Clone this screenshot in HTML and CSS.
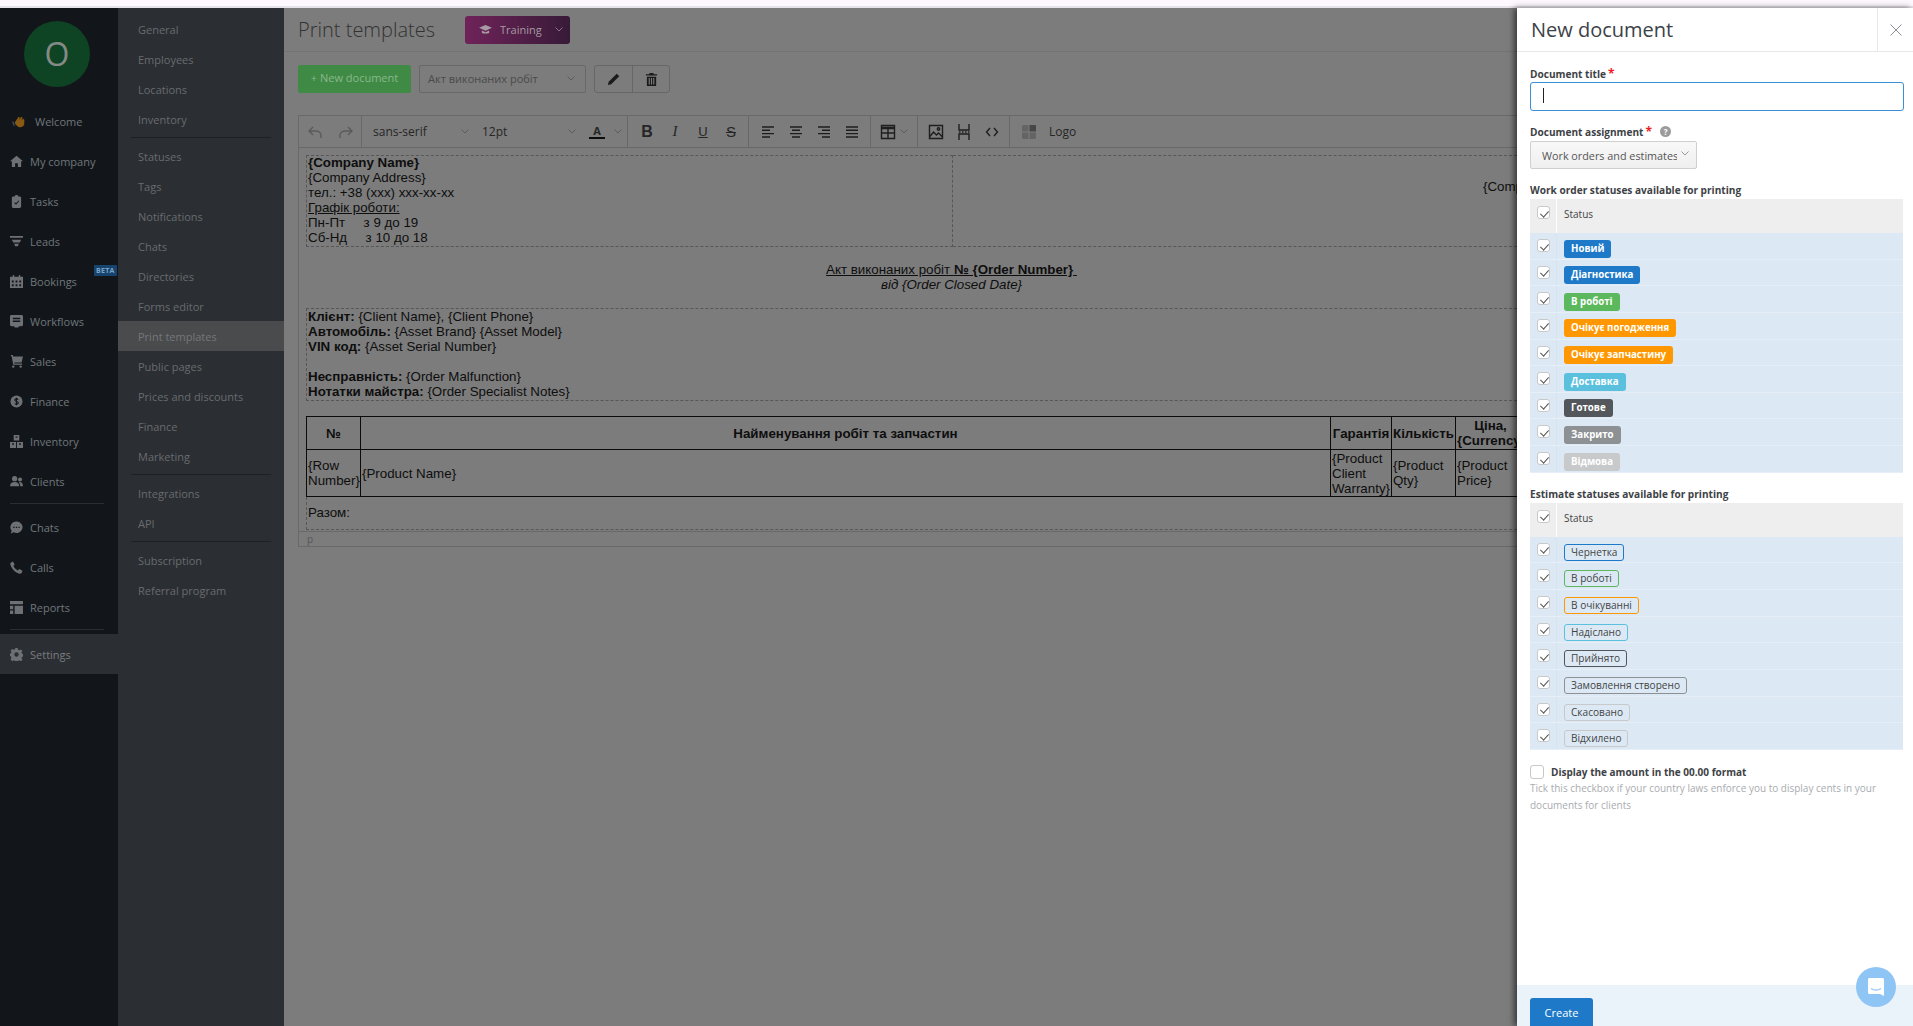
FILE: index.html
```html
<!DOCTYPE html>
<html lang="en">
<head>
<meta charset="utf-8">
<title>Print templates</title>
<link rel="stylesheet" href="styles.css">
</head>
<body>
<div class="strip"></div>
<div class="app">
  <nav class="sidebar">
    <div class="avatar">O</div>
    <a class="nav-item welcome"><svg class="hand" viewBox="0 0 16 16"><path fill="#8a5a12" d="M3 9 7 3l1.5 1L7 7l3-4 1.4 1L10 7l2-2 1.2 1L13 11c-.6 3-4.4 4-6.4 2.6L3.6 11z"/><path fill="#3b4f63" d="M0 8l2 5 1-1-1.500-4z"/></svg>Welcome</a>
    <a class="nav-item"><svg class="ico" viewBox="0 0 14 14"><path d="M7 .8 0 6.800h2V13h3.500V9h3v4H12V6.800h2z"/></svg>My company</a>
    <a class="nav-item"><svg class="ico" viewBox="0 0 14 14"><path fill-rule="evenodd" d="M5 1.500a2 1.500 0 0 1 4 0h1.500c.8 0 1.500.7 1.500 1.500v9.500c0 .8-.7 1.500-1.500 1.500h-7C2.700 14 2 13.300 2 12.500V3c0-.8.7-1.500 1.500-1.500zM4.500 8.500l2 2 3.500-4-.8-.7-2.700 3.100-1.300-1.200z"/></svg>Tasks</a>
    <a class="nav-item"><svg class="ico" viewBox="0 0 14 14"><path d="M0 1h14v2H0zM2 5h10l-1.500 3h-7zM4.500 9.500h5L8.500 12h-3z"/></svg>Leads</a>
    <a class="nav-item"><svg class="ico" viewBox="0 0 14 14"><path fill-rule="evenodd" d="M3 0h1.500v2h5V0H11v2h3v12H0V2h3zM2 6v2h2V6zm4 0v2h2V6zm4 0v2h2V6zM2 10v2h2v-2zm4 0v2h2v-2zm4 0v2h2v-2z"/></svg>Bookings<span class="beta">BETA</span></a>
    <a class="nav-item"><svg class="ico" viewBox="0 0 14 14"><path fill-rule="evenodd" d="M1.500 0h11c.8 0 1.500.7 1.500 1.500v9c0 .8-.7 1.500-1.500 1.500H9.500L9 13.500H5L4.500 12h-3C.7 12 0 11.300 0 10.500v-9C0 .7.7 0 1.500 0zM3 3v1.500h8V3zm0 3v1.500h8V6z"/></svg>Workflows</a>
    <a class="nav-item"><svg class="ico" viewBox="0 0 14 14"><path d="M1 0h2l.4 1.500H14L12.500 8H4.500l.3 1.200H13v1.300H3.500L1.800 1.300H1z"/><circle cx="3.500" cy="12.500" r="1.300"/><circle cx="11.500" cy="12.500" r="1.300"/></svg>Sales</a>
    <a class="nav-item"><svg class="ico" viewBox="0 0 14 14"><circle cx="7" cy="7" r="6.500"/><path fill="none" stroke="#12161a" stroke-width="1.200" d="M9 4.800C8 3.900 5.200 3.900 5.200 5.600 5.200 7.400 9 6.600 9 8.400 9 10.100 6 10.100 5 9.200M7 3v8"/></svg>Finance</a>
    <a class="nav-item"><svg class="ico" viewBox="0 0 14 14"><path fill-rule="evenodd" d="M4 0h6v6H4zM6 1.500V3h2V1.500zM0 7.500h6.500V14H0zM2.300 9v1.500h2V9zM7.500 7.500H14V14H7.500zM9.700 9v1.500h2V9z"/></svg>Inventory</a>
    <a class="nav-item"><svg class="ico" viewBox="0 0 14 14"><circle cx="5" cy="4" r="2.800"/><circle cx="10.800" cy="4.800" r="2.200"/><path d="M0 12c0-3 2-4.500 5-4.500S10 9 10 12zM11 12c0-1.800-.4-3.200-1.500-4.300 2.500-.5 4.500 1 4.500 4.300z"/></svg>Clients</a>
    <div class="nav-sep"></div>
    <a class="nav-item"><svg class="ico" viewBox="0 0 14 14"><path fill-rule="evenodd" d="M7 .5a6.500 6.200 0 1 1-3 11.700L.8 13.500l1-3A6.500 6.200 0 0 1 7 .5zM3.500 6.300v1.200h1.400V6.300zm2.800 0v1.200h1.400V6.300zm2.800 0v1.200h1.400V6.300z"/></svg>Chats</a>
    <a class="nav-item"><svg class="ico" viewBox="0 0 14 14"><path d="M3.200.5 5 3.800 3.700 5.300c.8 2 2.500 3.700 4.700 4.800l1.500-1.400L13.500 10.600 12.500 13c-.4.700-1.300 1-2 .8C5.500 12.300 1.700 8.500.3 3.500c-.2-.8.100-1.500.8-2z"/></svg>Calls</a>
    <a class="nav-item"><svg class="ico" viewBox="0 0 14 14"><path d="M0 0h14v3.500H0zM0 5h3.500v3.800H0zM0 10.300h3.500V14H0zM5 5h9v9H5z"/></svg>Reports</a>
    <div class="nav-sep nav-sep-last"></div>
    <a class="nav-item active"><svg class="ico" viewBox="0 0 14 14"><path fill-rule="evenodd" d="M5.800 0h2.400l.4 1.900 1.400.6 1.700-1 1.700 1.700-1 1.700.6 1.400 2 .4v2.400l-2 .4-.6 1.400 1 1.700-1.700 1.700-1.700-1-1.400.6-.4 2H5.800l-.4-2-1.400-.6-1.700 1L.6 12.100l1-1.700-.6-1.400-2-.4V6.200l2-.4.600-1.400-1-1.700L2.300 1l1.700 1 1.400-.6zM7 4.600a2.400 2.400 0 1 0 0 4.800 2.400 2.400 0 0 0 0-4.800z"/></svg>Settings</a>
  </nav>

  <nav class="subnav">
    <a class="sub-item">General</a>
    <a class="sub-item">Employees</a>
    <a class="sub-item">Locations</a>
    <a class="sub-item">Inventory</a>
    <div class="sub-sep"></div>
    <a class="sub-item">Statuses</a>
    <a class="sub-item">Tags</a>
    <a class="sub-item">Notifications</a>
    <a class="sub-item">Chats</a>
    <a class="sub-item">Directories</a>
    <a class="sub-item">Forms editor</a>
    <a class="sub-item current">Print templates</a>
    <a class="sub-item">Public pages</a>
    <a class="sub-item">Prices and discounts</a>
    <a class="sub-item">Finance</a>
    <a class="sub-item">Marketing</a>
    <div class="sub-sep"></div>
    <a class="sub-item">Integrations</a>
    <a class="sub-item">API</a>
    <div class="sub-sep"></div>
    <a class="sub-item">Subscription</a>
    <a class="sub-item">Referral program</a>
  </nav>

  <main class="main">
    <header class="page-head">
      <h1 class="page-title">Print templates</h1>
      <div class="training">
        <svg class="cap" viewBox="0 0 14 12"><path d="M7 1 0 4.200l7 3.200 7-3.200zM3 7.200V9.500c1.500 1.300 6.500 1.300 8 0V7.200L7 9z"/></svg>
        <span>Training</span>
        <svg class="chev chev-training" viewBox="0 0 8 5"><path d="M.5.5 4 4 7.500.5"/></svg>
      </div>
    </header>
    <div class="actions">
      <button class="btn-new">+ New document</button>
      <div class="doc-select"><span>Акт виконаних робіт</span><svg class="chev" viewBox="0 0 8 5"><path d="M.5.5 4 4 7.500.5"/></svg></div>
      <div class="btn-group">
        <span class="btn-cell"><svg class="act-ico" viewBox="0 0 14 14"><path d="M10.500.8 13.200 3.500 4.500 12.200 1 13l.8-3.500z"/></svg></span>
        <span class="btn-cell"><svg class="act-ico" viewBox="0 0 14 14"><path fill-rule="evenodd" d="M5 0h4l.5 1.300H13v1.500H1V1.300h3.500zM2 4h10v10H2zm2 1.500v7h1.200v-7zm2.400 0v7h1.200v-7zm2.400 0v7H10v-7z"/></svg></span>
      </div>
    </div>
    <section class="editor">
      <div class="toolbar">
        <div class="tb-group tb-history">
          <svg class="tb-ico light" viewBox="0 0 16 16"><path d="M6 3 2 7l4 4M2 7h7c3 0 5 2 5 4.500V14"/></svg>
          <svg class="tb-ico light" viewBox="0 0 16 16"><path d="M10 3l4 4-4 4M14 7H7c-3 0-5 2-5 4.500V14"/></svg>
        </div>
        <div class="tb-group tb-font">
          <span class="tb-select tb-family">sans-serif<svg class="chev" viewBox="0 0 8 5"><path d="M.5.5 4 4 7.500.5"/></svg></span>
          <span class="tb-select tb-size">12pt<svg class="chev" viewBox="0 0 8 5"><path d="M.5.5 4 4 7.500.5"/></svg></span>
          <span class="tb-color"><span class="tb-a">A</span><svg class="chev" viewBox="0 0 8 5"><path d="M.5.5 4 4 7.500.5"/></svg></span>
        </div>
        <div class="tb-group tb-format">
          <span class="tb-b">B</span><span class="tb-i">I</span><span class="tb-u">U</span><span class="tb-s">S</span>
        </div>
        <div class="tb-group tb-align">
          <svg class="tb-ico" viewBox="0 0 16 16"><path d="M2 3h12M2 6.300h8M2 9.600h12M2 13h8"/></svg>
          <svg class="tb-ico" viewBox="0 0 16 16"><path d="M2 3h12M4 6.300h8M2 9.600h12M4 13h8"/></svg>
          <svg class="tb-ico" viewBox="0 0 16 16"><path d="M2 3h12M6 6.300h8M2 9.600h12M6 13h8"/></svg>
          <svg class="tb-ico" viewBox="0 0 16 16"><path d="M2 3h12M2 6.300h12M2 9.600h12M2 13h12"/></svg>
        </div>
        <div class="tb-group tb-table">
          <svg class="tb-ico" viewBox="0 0 16 16"><path d="M1.500 1.500h13v13h-13zM1.500 3.500h13M1.500 4.500h13M1.500 9h13M8 4.500v10"/></svg>
          <svg class="chev" viewBox="0 0 8 5"><path d="M.5.5 4 4 7.500.5"/></svg>
        </div>
        <div class="tb-group tb-insert">
          <svg class="tb-ico" viewBox="0 0 16 16"><path d="M1.500 1.500h13v13h-13zM1.500 13l4-5 3 3 2-2 4 4"/><circle cx="10.500" cy="5" r="1.200"/></svg>
          <svg class="tb-ico" viewBox="0 0 16 16"><path d="M3 0v6h10V0M3 16v-6h10v6M3 8h1.500M6 8h1.500M9 8h1.500M12 8h1.500"/></svg>
          <svg class="tb-ico" viewBox="0 0 16 16"><path d="M6 4 2.500 8 6 12M10 4l3.500 4L10 12"/></svg>
        </div>
        <div class="tb-group tb-logo">
          <svg class="logo-ico" viewBox="0 0 16 16"><rect x="1" y="1" width="14" height="14" rx="1.500" fill="#646464"/><path d="M8 1h7v7H8z" fill="#474747"/><path d="M1 8h14M8 1v14" stroke="#7c7c7c" stroke-width="1"/></svg>
          <span>Logo</span>
        </div>
      </div>
      <div class="doc">
        <table class="doc-head">
          <tr>
            <td class="company"><div class="cell-text"><strong>{Company Name}</strong><br>{Company Address}<br>тел.: +38 (xxx) xxx-xx-xx<br><u>Графік роботи:</u><br>Пн-Пт &nbsp; &nbsp; з 9 до 19<br>Сб-Нд &nbsp; &nbsp; з 10 до 18</div></td>
            <td class="logo-cell">{Company Logo}</td>
          </tr>
        </table>
        <div class="doc-title"><u>Акт виконаних робіт <strong>№ {Order Number}</strong>&nbsp;</u><br><em>від {Order Closed Date}</em></div>
        <table class="doc-client">
          <tr><td><strong>Клієнт:</strong> {Client Name}, {Client Phone}<br><strong>Автомобіль:</strong> {Asset Brand} {Asset Model}<br><strong>VIN код:</strong> {Asset Serial Number}<br><br><strong>Несправність:</strong> {Order Malfunction}<br><strong>Нотатки майстра:</strong> {Order Specialist Notes}</td></tr>
        </table>
        <table class="doc-items">
          <colgroup><col class="c1"><col class="c2"><col class="c3"><col class="c4"><col class="c5"><col class="c6"></colgroup>
          <tr class="items-head"><th>№</th><th>Найменування робіт та запчастин</th><th>Гарантія</th><th>Кількість</th><th>Ціна, {Currency}</th><th>Сума</th></tr>
          <tr class="items-row"><td>{Row Number}</td><td>{Product Name}</td><td>{Product Client Warranty}</td><td>{Product Qty}</td><td>{Product Price}</td><td>{Product Sum}</td></tr>
        </table>
        <table class="doc-total"><tr><td>Разом:</td></tr></table>
      </div>
      <div class="statusbar">p</div>
    </section>
  </main>

  <aside class="panel">
    <div class="panel-head">
      <h2 class="panel-title">New document</h2>
      <div class="panel-close"><svg viewBox="0 0 12 12"><path d="M.5.5l11 11M11.500.5l-11 11"/></svg></div>
    </div>
    <div class="panel-body">
      <label class="label">Document title<span class="req">*</span></label>
      <div class="input"><span class="caret"></span></div>
      <label class="label label-assign">Document assignment<span class="req">*</span><span class="help">?</span></label>
      <div class="assign-select"><span>Work orders and estimates</span><svg class="chev" viewBox="0 0 8 5"><path d="M.5.5 4 4 7.500.5"/></svg></div>

      <div class="label label-sect">Work order statuses available for printing</div>
      <div class="status-table">
        <div class="st-head"><span class="st-check"><i class="cb on"></i></span><span class="st-name">Status</span></div>
        <div class="st-row"><span class="st-check"><i class="cb on"></i></span><span class="st-cell"><b class="badge blue">Новий</b></span></div>
        <div class="st-row"><span class="st-check"><i class="cb on"></i></span><span class="st-cell"><b class="badge blue">Діагностика</b></span></div>
        <div class="st-row"><span class="st-check"><i class="cb on"></i></span><span class="st-cell"><b class="badge green">В роботі</b></span></div>
        <div class="st-row"><span class="st-check"><i class="cb on"></i></span><span class="st-cell"><b class="badge orange">Очікує погодження</b></span></div>
        <div class="st-row"><span class="st-check"><i class="cb on"></i></span><span class="st-cell"><b class="badge orange">Очікує запчастину</b></span></div>
        <div class="st-row"><span class="st-check"><i class="cb on"></i></span><span class="st-cell"><b class="badge cyan">Доставка</b></span></div>
        <div class="st-row"><span class="st-check"><i class="cb on"></i></span><span class="st-cell"><b class="badge dark">Готове</b></span></div>
        <div class="st-row"><span class="st-check"><i class="cb on"></i></span><span class="st-cell"><b class="badge gray">Закрито</b></span></div>
        <div class="st-row"><span class="st-check"><i class="cb on"></i></span><span class="st-cell"><b class="badge silver">Відмова</b></span></div>
      </div>

      <div class="label label-sect second">Estimate statuses available for printing</div>
      <div class="status-table">
        <div class="st-head"><span class="st-check"><i class="cb on"></i></span><span class="st-name">Status</span></div>
        <div class="st-row"><span class="st-check"><i class="cb on"></i></span><span class="st-cell"><b class="tag t-blue">Чернетка</b></span></div>
        <div class="st-row"><span class="st-check"><i class="cb on"></i></span><span class="st-cell"><b class="tag t-green">В роботі</b></span></div>
        <div class="st-row"><span class="st-check"><i class="cb on"></i></span><span class="st-cell"><b class="tag t-orange">В очікуванні</b></span></div>
        <div class="st-row"><span class="st-check"><i class="cb on"></i></span><span class="st-cell"><b class="tag t-cyan">Надіслано</b></span></div>
        <div class="st-row"><span class="st-check"><i class="cb on"></i></span><span class="st-cell"><b class="tag t-dark">Прийнято</b></span></div>
        <div class="st-row"><span class="st-check"><i class="cb on"></i></span><span class="st-cell"><b class="tag t-gray">Замовлення створено</b></span></div>
        <div class="st-row"><span class="st-check"><i class="cb on"></i></span><span class="st-cell"><b class="tag t-silver">Скасовано</b></span></div>
        <div class="st-row"><span class="st-check"><i class="cb on"></i></span><span class="st-cell"><b class="tag t-silver">Відхилено</b></span></div>
      </div>

      <div class="format-row"><i class="cb big"></i><span class="format-label">Display the amount in the 00.00 format</span></div>
      <p class="hint">Tick this checkbox if your country laws enforce you to display cents in your documents for clients</p>
    </div>
    <div class="panel-foot"><button class="btn-create">Create</button></div>
    <div class="chat-bubble"><svg viewBox="0 0 18 20"><path fill="#fff" d="M2.500 1h13c.8 0 1.500.7 1.500 1.500V19l-4-2H2.500C1.700 17 1 16.300 1 15.500v-13C1 1.700 1.700 1 2.500 1z"/><path fill="none" stroke="#8ec5f5" stroke-width="1.200" d="M4 11.500c3 2 7 2 10 0"/></svg></div>
  </aside>
</div>
</body>
</html>
```
FILE: styles.css
```css
* { box-sizing: border-box; }
html, body { margin: 0; height: 100%; overflow: hidden; }
body {
  display: flex;
  flex-direction: column;
  font-family: "Open Sans", "Noto Sans", sans-serif;
  background: #7c7c7c;
}
.strip { height: 8px; flex: none; background: #fdf8fe; border-bottom: 2px solid #e7e3ea; }
.app { flex: 1; display: flex; min-height: 0; }

/* main sidebar */
.sidebar { width: 118px; flex: none; background: #12161a; padding-top: 13px; }
.avatar {
  width: 66px; height: 66px; margin: 0 0 14px 24px;
  border-radius: 50%; background: #0e4423; color: #858a88;
  display: flex; align-items: center; justify-content: center;
  font-size: 32px; line-height: 1;
}
.nav-item {
  position: relative;
  display: flex; align-items: center; gap: 7px;
  height: 40px; padding-left: 10px;
  color: #70767c; font-size: 11px;
}
.nav-item.welcome { padding-left: 12px; gap: 8px; }
.nav-item.active { background: #2b2e32; color: #797d81; }
.ico { width: 13px; height: 13px; flex: none; fill: #6d7175; }
.hand { width: 15px; height: 15px; flex: none; }
.beta {
  position: absolute; left: 94px; top: 4px;
  height: 11px; padding: 0 2px; border-radius: 1px;
  background: #16446f; color: #7aa3c6;
  font-size: 7px; font-weight: 700; line-height: 11px; letter-spacing: .3px;
}
.nav-sep { height: 1px; margin: 2px 14px 3px 10px; background: #2a2e32; }
.nav-sep-last { margin-bottom: 4px; }

/* second level */
.subnav { width: 166px; flex: none; background: #2b2e32; padding-top: 6px; }
.sub-item {
  display: flex; align-items: center;
  height: 30px; padding-left: 20px;
  color: #686c70; font-size: 11px;
}
.sub-item.current { background: #494b4d; color: #74777a; }
.sub-sep { height: 1px; margin: 3px 13px 3px 13px; background: #1e2124; }

/* main */
.main { flex: 1; min-width: 0; overflow: hidden; background: #7c7c7c; }
.page-head {
  display: flex; align-items: center; gap: 32px;
  height: 44px; padding: 0 14px; border-bottom: 1px solid #747474;
}
.page-title { margin: 0; width: 135px; font-size: 20px; font-weight: 300; color: #323232; white-space: nowrap; }
.training {
  display: flex; align-items: center;
  width: 105px; height: 28px; padding-left: 14px;
  border-radius: 3px; color: #a59aa2; font-size: 11px;
  background: linear-gradient(90deg, #6f2359, #371a38);
}
.cap { width: 13px; height: 11px; fill: #a89aa4; margin-right: 8px; }
.chev { width: 8px; height: 5px; fill: none; stroke: #5c5c5c; stroke-width: 1; flex: none; }
.chev-training { margin-left: 13px; stroke: #8d6f88; }

.actions { display: flex; align-items: center; height: 28px; margin: 13px 0 22px 14px; }
.btn-new {
  width: 113px; height: 28px; padding: 0 0 4px; border: 0; border-radius: 2px;
  background: #3f8a45; color: #8ab88c; font: 11px "Open Sans", sans-serif;
}
.doc-select {
  display: flex; align-items: center; justify-content: space-between;
  width: 167px; height: 28px; margin-left: 8px; padding: 0 10px 2px 8px;
  border: 1px solid #686868; border-radius: 2px; color: #4a4a4a; font-size: 11px;
}
.btn-group { display: flex; height: 28px; margin-left: 8px; border: 1px solid #666; border-radius: 3px; }
.btn-cell { width: 37px; display: flex; align-items: center; justify-content: center; }
.btn-cell + .btn-cell { border-left: 1px solid #666; }
.act-ico { width: 13px; height: 13px; fill: #1b1b1b; }

/* editor */
.editor { width: 1340px; margin-left: 14px; border: 1px solid #696969; }
.toolbar { display: flex; align-items: center; height: 32px; border-bottom: 1px solid #686868; color: #262626; font-size: 12px; }
.tb-group { display: flex; align-items: center; height: 100%; border-right: 1px solid #686868; flex: none; }
.tb-ico { width: 16px; height: 16px; fill: none; stroke: #1e1e1e; stroke-width: 1.400; flex: none; }
.tb-ico.light { stroke: #5a5a5a; }
.tb-history { width: 63px; gap: 15px; padding-left: 8px; }
.tb-font { width: 266px; padding-left: 11px; font-size: 12px; }
.tb-select { display: flex; align-items: center; justify-content: space-between; }
.tb-family { width: 96px; }
.tb-size { width: 94px; margin-left: 13px; }
.tb-color { display: flex; align-items: center; gap: 9px; margin-left: 13px; }
.tb-a { font-size: 11px; font-weight: 700; width: 16px; text-align: center; border-bottom: 2px solid #0c0c0c; line-height: 13px; }
.tb-format { width: 121px; padding-left: 11px; gap: 12px; font-family: "Liberation Sans", sans-serif; font-size: 15px; }
.tb-format span { width: 16px; text-align: center; }
.tb-b { font-weight: 700; font-size: 16px; }
.tb-i { font-style: italic; font-family: "Liberation Serif", serif; }
.tb-u { text-decoration: underline; font-size: 13px; }
.tb-s { text-decoration: line-through; }
.tb-align { width: 122px; padding-left: 11px; gap: 12px; }
.tb-table { width: 47px; padding-left: 9px; gap: 4px; }
.tb-insert { width: 92px; padding-left: 10px; gap: 12px; }
.tb-logo { border-right: 0; padding-left: 11px; gap: 12px; }
.logo-ico { width: 16px; height: 16px; }

/* document */
.doc { padding: 7px 0 0 7px; font: 13.333px/15px "Liberation Sans", Arial, sans-serif; color: #0e0e0e; }
.doc table { width: 1291px; border-collapse: collapse; table-layout: fixed; }
.doc td, .doc th { padding: 0 1px; }
.doc-head td, .doc-client td, .doc-total td { border: 1px dashed #575757; vertical-align: top; }
.cell-text { margin-top: -1px; padding-bottom: 1px; }
.doc-client td { padding-bottom: 1px; }
.company { width: 646px; }
.doc .logo-cell { padding: 23px 0 0 530px; white-space: nowrap; }
.doc-title { width: 1291px; text-align: center; padding: 15px 0 16px; }
.doc-items { margin-top: 15px; }
.doc-items th, .doc-items td { border: 1px solid #0b0b0b; }
.c1 { width: 54px; } .c2 { width: 970px; } .c3 { width: 61px; } .c4 { width: 64px; } .c5 { width: 70px; } .c6 { width: 72px; }
.items-head { height: 33px; }
.items-row { height: 47px; }
.doc .doc-total td { height: 32px; vertical-align: middle; border-top: 0; }
.statusbar { height: 15px; margin-top: 1px; padding-left: 8px; border-top: 1px solid #696969; color: #565656; font-size: 10px; line-height: 14px; }

/* panel */
.panel {
  position: relative; z-index: 1;
  width: 396px; flex: none;
  display: flex; flex-direction: column;
  background: #fff; box-shadow: -3px 0 6px rgba(0,0,0,.55);
}
.panel-head { display: flex; height: 44px; flex: none; border-bottom: 1px solid #e8e8e8; }
.panel-title { flex: 1; margin: 0; padding-left: 14px; font-size: 20px; line-height: 43px; font-weight: 400; color: #3c4247; }
.panel-close { width: 36px; display: flex; align-items: center; justify-content: center; border-left: 1px solid #e8e8e8; }
.panel-close svg { width: 12px; height: 12px; fill: none; stroke: #8b8f93; }
.panel-body { flex: 1; min-height: 0; padding: 15px 10px 0 13px; }
.label { display: block; font-size: 10.100px; font-weight: 700; line-height: 15px; color: #3d4246; }
.req { color: #ee1c25; font-size: 12px; line-height: 0; margin-left: 2px; }
.input { height: 29px; margin: 0 0 14px 0; border: 1px solid #3b8fd6; border-radius: 3px; padding: 5px 12px; width: 374px; }
.caret { display: block; width: 1px; height: 15px; background: #222; }
.help {
  display: inline-block; width: 11px; height: 11px; margin-left: 8px; vertical-align: 1px;
  border-radius: 50%; background: #9b9b9b; color: #fff;
  font-size: 8px; line-height: 11px; text-align: center;
}
.assign-select {
  display: flex; align-items: center; gap: 4px;
  width: 167px; height: 28px; margin-top: 1px; padding-left: 11px;
  border: 1px solid #cfcfcf; border-radius: 2px;
  background: linear-gradient(#f8f8f8, #efefef); color: #555; font-size: 10.800px;
}
.assign-select span { width: 135px; overflow: hidden; white-space: nowrap; }
.assign-select .chev { stroke: #999; margin-top: -3px; }
.label-sect { margin-top: 14px; height: 16px; }
.label-sect.second { margin-top: 14px; height: 16px; }
.status-table { width: 373px; }
.st-head { display: flex; height: 34px; background: #eee; color: #444; font-size: 10px; }
.st-row { display: flex; height: 26.650px; background: #dce9f5; border-bottom: 1px solid #e6eff8; }
.st-check { width: 27px; flex: none; padding: 7px 0 0 7px; border-right: 1px solid #fff; }
.st-row .st-check { border-right-color: #d6e4f1; padding-top: 6px; }
.st-name { padding: 8px 0 0 7px; }
.st-cell { display: flex; align-items: flex-start; padding: 6.500px 0 0 7px; }
.cb {
  display: block; position: relative;
  width: 13px; height: 13px;
  border: 1px solid #c9c9c9; border-radius: 3px; background: #fff;
}
.cb.on::after {
  content: ""; position: absolute; left: 3.500px; top: 1.500px;
  width: 4px; height: 7px;
  border: solid #555; border-width: 0 1.200px 1.200px 0;
  transform: rotate(42deg);
}
.cb.big { width: 14px; height: 14px; border-radius: 3px; flex: none; }
.badge {
  display: block; height: 18px; padding: 0 7px; border-radius: 3px;
  color: #fff; font-size: 9.700px; font-weight: 700; line-height: 18px; white-space: nowrap;
}
.blue { background: #1e7ac9; } .green { background: #5cb85c; } .orange { background: #ff9800; }
.cyan { background: #5bc0de; } .dark { background: #53575b; } .gray { background: #8e9194; } .silver { background: #c8c9ca; }
.tag {
  display: block; height: 17px; margin-top: .5px; padding: 0 6px; border: 1px solid; border-radius: 3px;
  color: #444; font-size: 10.100px; font-weight: 400; line-height: 15px; white-space: nowrap;
}
.t-blue { border-color: #1e7ac9; } .t-green { border-color: #5cb85c; } .t-orange { border-color: #ff9800; }
.t-cyan { border-color: #5bc0de; } .t-dark { border-color: #53575b; } .t-gray { border-color: #8e9194; } .t-silver { border-color: #c8c9ca; }
.format-row { display: flex; align-items: center; gap: 7px; margin-top: 15px; height: 14px; }
.format-label { font-size: 10px; font-weight: 700; color: #3d4246; }
.hint { margin: 1px 0 0; font-size: 10px; line-height: 17.500px; color: #a9acaf; width: 370px; }
.panel-foot { height: 41px; flex: none; padding: 13px 0 0 13px; background: #eaf2fa; overflow: hidden; }
.btn-create {
  display: block; width: 63px; height: 34px; padding: 0 0 6px; border: 0; border-radius: 3px;
  background: #1e7ac9; color: #fff; font: 11px "Open Sans", sans-serif;
}
.chat-bubble {
  position: absolute; right: 17px; bottom: 19px;
  width: 40px; height: 40px; border-radius: 50%;
  background: #8ec5f5; display: flex; align-items: center; justify-content: center;
}
.chat-bubble svg { width: 18px; height: 20px; }
```
